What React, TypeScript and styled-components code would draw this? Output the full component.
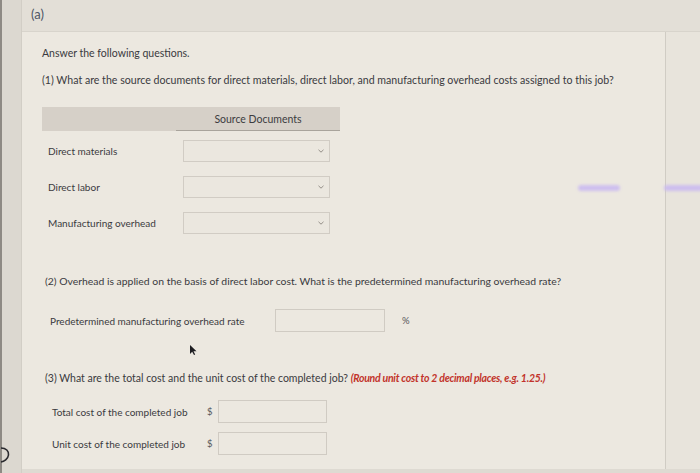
import React from "react";
import styled, { createGlobalStyle } from "styled-components";

const Global = createGlobalStyle`
  html, body { margin: 0; padding: 0; background: #e4e0d8; }
  * { box-sizing: border-box; }
`;

const Page = styled.div`
  position: relative;
  width: 700px;
  height: 473px;
  overflow: hidden;
  display: flex;
  font-family: Lato, "Liberation Sans", sans-serif;
  color: #3a3a3e;
  background: #e6e2da;
`;

const LeftRail = styled.div`
  width: 22px;
  flex: none;
  background: #dcd8d0;
  border-left: 2px solid #8e8a84;
  border-right: 1px solid #d2cec6;
`;

const Main = styled.div`
  flex: 1;
  display: flex;
  flex-direction: column;
`;

const Header = styled.div`
  height: 32px;
  flex: none;
  display: flex;
  align-items: flex-start;
  padding: 6px 0 0 9px;
  background: #e3dfd7;
  border-bottom: 1px solid #d8d4cc;
  font-size: 13px;
  color: #4e5666;
`;

const BodyRow = styled.div`
  flex: 1;
  display: flex;
  border-bottom: 4px solid #dedad2;
`;

const Panel = styled.div`
  width: 644px;
  flex: none;
  background: #ece8e0;
  border-right: 1px solid #d0ccc4;
  padding: 14px 0 0 20px;
  display: flex;
  flex-direction: column;
`;

const RightStrip = styled.div`
  flex: 1;
  background: #e8e4dc;
`;

const Text = styled.div<{ $top: number; $left?: number; $size?: number }>`
  margin-top: ${(p) => p.$top}px;
  margin-left: ${(p) => p.$left ?? 0}px;
  font-size: ${(p) => p.$size ?? 10.5}px;
  line-height: 14px;
  white-space: nowrap;
`;

const Hint = styled.span`
  color: #c2332b;
  font-weight: 700;
  font-style: italic;
  letter-spacing: -0.25px;
`;

const Table = styled.div`
  margin-top: 20px;
  width: 298px;
  display: flex;
  flex-direction: column;
`;

const TableHead = styled.div`
  display: grid;
  grid-template-columns: 134px 164px;
  height: 24px;
  background: #d6d0c8;
`;

const HeadCell = styled.div<{ $underline?: boolean }>`
  display: flex;
  align-items: center;
  justify-content: center;
  font-size: 10.5px;
  color: #3c3c40;
  border-bottom: ${(p) => (p.$underline ? "1.5px solid #a9a49c" : "none")};
`;

const TableRow = styled.div<{ $top: number }>`
  margin-top: ${(p) => p.$top}px;
  display: grid;
  grid-template-columns: 141px 147px;
  align-items: center;
  height: 22px;
`;

const RowLabel = styled.div`
  padding-left: 6px;
  font-size: 10px;
  white-space: nowrap;
`;

const Select = styled.div`
  height: 22px;
  border: 1px solid #d1ccc4;
  background: #ebe7df;
  display: flex;
  align-items: center;
  justify-content: flex-end;
  padding-right: 5px;
`;

const FieldRow = styled.div<{ $top: number }>`
  margin-top: ${(p) => p.$top}px;
  display: flex;
  align-items: center;
  height: 23px;
`;

const FieldLabel = styled.div<{ $width: number; $indent: number }>`
  width: ${(p) => p.$width}px;
  padding-left: ${(p) => p.$indent}px;
  font-size: 10px;
  white-space: nowrap;
`;

const Input = styled.div<{ $width: number }>`
  width: ${(p) => p.$width}px;
  height: 23px;
  border: 1px solid #d0cbc3;
  background: #ece8e0;
`;

const Unit = styled.div<{ $width: number; $pad: number }>`
  width: ${(p) => p.$width}px;
  padding-left: ${(p) => p.$pad}px;
  font-size: 9.5px;
  color: #55555a;
`;

const Streak = styled.div<{ $x: number; $y: number; $w: number }>`
  position: absolute;
  left: ${(p) => p.$x}px;
  top: ${(p) => p.$y}px;
  width: ${(p) => p.$w}px;
  height: 6px;
  border-radius: 4px;
  background: #c9b8f2;
  filter: blur(1.5px);
  opacity: 0.85;
`;

const Overlay = styled.svg<{ $x: number; $y: number }>`
  position: absolute;
  left: ${(p) => p.$x}px;
  top: ${(p) => p.$y}px;
`;

const Chevron = () => (
  <svg width="6" height="4" viewBox="0 0 6 4">
    <path d="M0.5 0.8 L3 3.2 L5.5 0.8" fill="none" stroke="#8a857e" strokeWidth="0.9" />
  </svg>
);

const rows = ["Direct materials", "Direct labor", "Manufacturing overhead"];

export default function App() {
  return (
    <>
      <Global />
      <Page>
        <LeftRail />
        <Main>
          <Header>(a)</Header>
          <BodyRow>
            <Panel>
              <Text $top={0}>Answer the following questions.</Text>
              <Text $top={13} $size={10.6}>
                (1) What are the source documents for direct materials, direct labor, and manufacturing overhead costs assigned to this job?
              </Text>
              <Table>
                <TableHead>
                  <HeadCell />
                  <HeadCell $underline>Source Documents</HeadCell>
                </TableHead>
                {rows.map((r, i) => (
                  <TableRow key={r} $top={i === 0 ? 9 : 14}>
                    <RowLabel>{r}</RowLabel>
                    <Select>
                      <Chevron />
                    </Select>
                  </TableRow>
                ))}
              </Table>
              <Text $top={40} $left={3} $size={10.4}>
                (2) Overhead is applied on the basis of direct labor cost. What is the predetermined manufacturing overhead rate?
              </Text>
              <FieldRow $top={21}>
                <FieldLabel $width={233} $indent={8}>Predetermined manufacturing overhead rate</FieldLabel>
                <Input $width={110} />
                <Unit $width={30} $pad={17}>%</Unit>
              </FieldRow>
              <Text $top={39} $left={3}>
                (3) What are the total cost and the unit cost of the completed job?{" "}
                <Hint>(Round unit cost to 2 decimal places, e.g. 1.25.)</Hint>
              </Text>
              <FieldRow $top={15}>
                <FieldLabel $width={165} $indent={10}>Total cost of the completed job</FieldLabel>
                <Unit $width={11} $pad={0}>$</Unit>
                <Input $width={109} />
              </FieldRow>
              <FieldRow $top={9}>
                <FieldLabel $width={165} $indent={10}>Unit cost of the completed job</FieldLabel>
                <Unit $width={11} $pad={0}>$</Unit>
                <Input $width={109} />
              </FieldRow>
            </Panel>
            <RightStrip />
          </BodyRow>
        </Main>
        <Streak $x={578} $y={185} $w={42} />
        <Streak $x={664} $y={185} $w={40} />
        <Overlay $x={189} $y={344} width="8" height="12" viewBox="0 0 8 12">
          <path d="M1 1 L1 10 L3.2 7.8 L5 11 L6.2 10.4 L4.5 7.2 L7.5 7.2 Z" fill="#1e1e22" />
        </Overlay>
        <Overlay $x={0} $y={446} width="10" height="18" viewBox="0 0 10 18">
          <path d="M1 2 C6 2 9 5 8.5 9 C8 13 4 15.5 1 16" fill="none" stroke="#2a2a2e" strokeWidth="1.6" />
        </Overlay>
      </Page>
    </>
  );
}
